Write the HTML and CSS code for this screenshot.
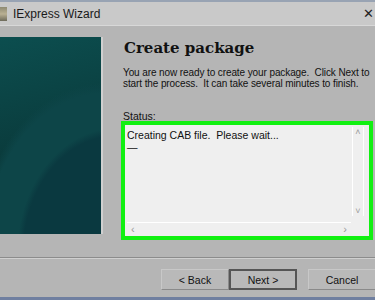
FILE: index.html
```html
<!DOCTYPE html>
<html lang="en">
<head>
  <meta charset="UTF-8">
  <meta name="viewport" content="width=device-width, initial-scale=1.0">
  <title>IExpress Wizard</title>
  <link rel="stylesheet" href="styles.css">
</head>
<body>
  <div class="window">
    <div class="titlebar">
      <div class="app-icon"></div>
      <span class="title">IExpress Wizard</span>
      <span class="close">&#x2715;</span>
    </div>
    <div class="main">
      <div class="banner"></div>
      <div class="content">
        <h1>Create package</h1>
        <p class="intro">You are now ready to create your package.&nbsp; Click Next to start the process.&nbsp; It can take several minutes to finish.</p>
        <div class="status-label">Status:</div>
        <div class="status-box">
          <div class="status-text">
            <div>Creating CAB file.&nbsp; Please wait...</div>
            <div>&mdash;</div>
          </div>
          <div class="vscroll">
            <span>&#x2C4;</span>
            <span>&#x2C5;</span>
          </div>
          <div class="hscroll">
            <span>&lsaquo;</span>
            <span>&rsaquo;</span>
          </div>
        </div>
      </div>
    </div>
    <div class="separator"></div>
    <div class="buttons">
      <button class="btn">&lt; Back</button>
      <button class="btn default">Next &gt;</button>
      <button class="btn cancel">Cancel</button>
    </div>
    <div class="taskbar"></div>
  </div>
</body>
</html>
```

FILE: styles.css
```css
body {
  margin: 0;
  padding: 0;
  font-family: "Liberation Sans", Arial, sans-serif;
  background-color: #b5b5b5;
  overflow: hidden;
}

.window {
  width: 375px;
  height: 300px;
  display: flex;
  flex-direction: column;
  background-color: #b5b5b5;
  border-top: 2px solid #98a3b3;
  box-sizing: border-box;
}

.titlebar {
  height: 23px;
  display: flex;
  align-items: center;
  background-color: #c9c9c9;
  border-bottom: 1px solid #d8d8d8;
  position: relative;
}

.app-icon {
  width: 7px;
  height: 14px;
  background: linear-gradient(#8e8a72, #b9b093 50%, #6d6a5a);
  margin-right: 6px;
}

.title {
  font-size: 12px;
  color: #1a1a1a;
}

.close {
  position: absolute;
  right: 1px;
  top: 4px;
  font-size: 13px;
  color: #222;
  font-family: "DejaVu Sans", sans-serif;
}

.main {
  display: flex;
  padding-top: 11px;
}

.banner {
  width: 104px;
  height: 197px;
  border-right: 2px solid #d0d0d0;
  background:
    radial-gradient(ellipse 150px 190px at 115% 110%, #0a3940 0%, #0a3940 62%, transparent 66%),
    radial-gradient(ellipse 170px 215px at 105% 105%, #0d4548 0%, #0d4548 70%, transparent 75%),
    linear-gradient(165deg, #0c4e4f, #0a3b3c 55%, #09333a);
}

.content {
  flex: 1;
  padding-left: 18px;
}

h1 {
  font-family: "DejaVu Serif", "Liberation Serif", serif;
  font-size: 15px;
  font-weight: bold;
  margin: 2px 0 10px 3px;
  color: #111;
}

.intro {
  font-size: 10px;
  line-height: 11px;
  letter-spacing: -0.1px;
  margin: 0 0 22px 2px;
  color: #111;
  width: 252px;
}

.status-label {
  font-size: 10.5px;
  line-height: 11px;
  margin-left: 2px;
  margin-bottom: -1px;
  color: #111;
}

.status-box {
  position: relative;
  width: 244px;
  height: 111px;
  border: 4px solid #11f011;
  background-color: #efefef;
}

.status-text {
  font-size: 10.5px;
  line-height: 12px;
  padding: 4px 2px;
  color: #111;
}

.vscroll {
  position: absolute;
  right: 5px;
  top: 2px;
  bottom: 20px;
  width: 10px;
  display: flex;
  flex-direction: column;
  justify-content: space-between;
  align-items: center;
  border-left: 1px solid #fff;
  border-right: 1px solid #fff;
  font-size: 9px;
  color: #999;
}

.hscroll {
  position: absolute;
  left: 2px;
  right: 18px;
  bottom: 1px;
  height: 12px;
  display: flex;
  justify-content: space-between;
  align-items: center;
  padding: 0 4px;
  border-top: 1px solid #fff;
  font-size: 11px;
  color: #999;
}

.separator {
  height: 1px;
  margin-top: 17px;
  background-color: #8c8c8c;
  border-bottom: 1px solid #cfcfcf;
}

.buttons {
  display: flex;
  justify-content: flex-end;
  padding-top: 10px;
  margin-right: -1px;
}

.btn {
  width: 68px;
  height: 21px;
  font-family: "Liberation Sans", Arial, sans-serif;
  font-size: 10.5px;
  color: #111;
  background-color: #b9b9b9;
  border: 1px solid #8a8a8a;
  border-top-color: #c8c8c8;
  border-left-color: #c8c8c8;
  padding: 0;
}

.btn.default {
  border: 2px solid #555;
}

.btn.cancel {
  margin-left: 11px;
}

.taskbar {
  margin-top: auto;
  height: 3px;
  background-color: #6f7fa0;
}
```
